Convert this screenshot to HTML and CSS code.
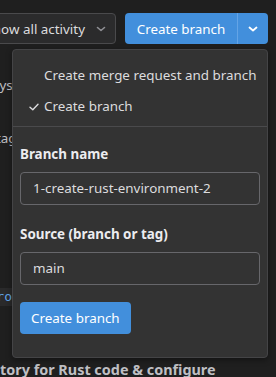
FILE: index.html
```html
<!DOCTYPE html>
<html>
<head>
<meta charset="utf-8">
<link rel="stylesheet" href="styles.css">
</head>
<body>
<div class="page">
  <div class="toolbar">
    <div class="select">Show all activity
      <svg class="chev" width="10" height="6" viewBox="0 0 10 6"><path d="M1.5 1.5 L5 4.5 L8.5 1.5" fill="none" stroke="#8f8f94" stroke-width="1.6" stroke-linecap="round" stroke-linejoin="round"/></svg>
    </div>
    <div class="split">
      <span class="split-main">Create branch</span>
      <span class="split-toggle">
        <svg width="10" height="6" viewBox="0 0 10 6"><path d="M1.5 1.5 L5 4.5 L8.5 1.5" fill="none" stroke="#fff" stroke-width="1.8" stroke-linecap="round" stroke-linejoin="round"/></svg>
      </span>
    </div>
  </div>
  <div class="behind">
    <div class="bg-line l1">systems</div>
    <div class="bg-line l2">tags</div>
    <div class="bg-code">pro</div>
    <div class="bg-title">tory for Rust code &amp; configure</div>
  </div>

  <div class="panel">
    <ul class="menu">
      <li class="item">Create merge request and branch</li>
      <li class="item checked">
        <svg class="check" width="10" height="8" viewBox="0 0 10 8"><path d="M1 4.2 L3.8 6.8 L9 1.2" fill="none" stroke="#dcdcde" stroke-width="1.4" stroke-linecap="round" stroke-linejoin="round"/></svg>
        Create branch</li>
    </ul>
    <form class="form">
      <label class="label">Branch name</label>
      <div class="input">1-create-rust-environment-2</div>
      <label class="label second">Source (branch or tag)</label>
      <div class="input">main</div>
      <div class="submit">Create branch</div>
    </form>
  </div>
</div>
</body>
</html>
```
FILE: styles.css
```css
html, body {
  margin: 0;
  padding: 0;
  background: #1f1f1f;
  font-family: "Noto Sans", "DejaVu Sans", sans-serif;
  font-size: 13.4px;
  color: #dcdcde;
}
.page {
  position: relative;
  width: 276px;
  height: 377px;
  overflow: hidden;
}
.toolbar {
  display: flex;
  justify-content: flex-end;
  gap: 9px;
  padding: 13px 8px 0 0;
}
.select {
  flex: none;
  display: flex;
  align-items: center;
  gap: 11px;
  height: 29px;
  padding: 0 9px 0 12px;
  border: 1px solid #4a4a4c;
  border-radius: 4px;
  background: #2b2b2c;
  color: #dcdcde;
  white-space: nowrap;
  margin-left: -200px;
}
.split {
  flex: none;
  display: flex;
  height: 31px;
  width: 143px;
  border-radius: 4px;
  background: #428fdc;
  color: #fff;
  overflow: hidden;
}
.split-main {
  flex: 1;
  display: flex;
  align-items: center;
  justify-content: center;
  border-right: 1px solid #64a4e6;
}
.split-toggle {
  width: 30px;
  display: flex;
  align-items: center;
  justify-content: center;
}
.behind {
  color: #bfbfc3;
}
.bg-line { height: 20px; line-height: 20px; white-space: nowrap; }
.l1 { margin-top: 31px; margin-left: -7px; }
.l2 { margin-top: 33px; margin-left: -4px; }
.bg-code {
  margin-top: 140px;
  margin-left: -18px;
  width: 30px;
  height: 18px;
  line-height: 18px;
  background: #2a2a2b;
  color: #63a6e9;
  font-family: "DejaVu Sans Mono", monospace;
  font-size: 13px;
  text-align: right;
}
.bg-title {
  margin-top: 54px;
  margin-left: 0;
  font-size: 14.4px;
  font-weight: bold;
  color: #bfbfc3;
  white-space: nowrap;
}
.panel {
  position: absolute;
  left: 12px;
  top: 49px;
  width: 254px;
  height: 307px;
  background: #333333;
  border: 1px solid #444446;
  border-radius: 4px;
  box-shadow: 0 2px 6px rgba(0,0,0,0.4);
}
.menu {
  list-style: none;
  margin: 0;
  padding: 10px 0 4px;
  border-bottom: 1px solid #4a4a4c;
}
.item {
  position: relative;
  height: 31px;
  line-height: 31px;
  padding-left: 31px;
  color: #dcdcde;
  white-space: nowrap;
}
.check {
  position: absolute;
  left: 16px;
  top: 12px;
}
.form {
  display: flex;
  flex-direction: column;
  align-items: flex-start;
  padding: 17px 7px 0 7px;
}
.label {
  font-weight: bold;
  color: #ececef;
  height: 20px;
  line-height: 20px;
}
.label.second { margin-top: 19px; }
.input {
  align-self: stretch;
  margin-top: 8px;
  height: 31px;
  line-height: 31px;
  padding: 0 12px;
  border: 1px solid #67676b;
  border-radius: 4px;
  color: #dcdcde;
}
.submit {
  margin-top: 17px;
  height: 32px;
  line-height: 32px;
  padding: 0 11px;
  background: #428fdc;
  border-radius: 4px;
  color: #fff;
}
```
